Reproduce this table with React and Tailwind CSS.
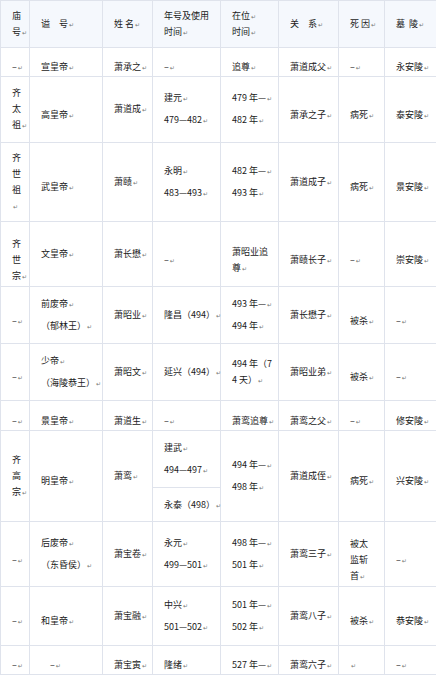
const WIDTHS = [29, 73, 50, 68, 58, 60, 46, 53]

// "|" = new paragraph, "/" = wrapped line, "¶" = paragraph mark, leading "^" = sits a bit low
const HEADER = ['庙/号¶', '谥　号¶', '姓 名¶', '年号及使用/时间¶', '在位¶/时间¶', '关　系¶', '死 因¶', '墓  陵¶']

const ROWS = [
  { h: 29, cells: ['^–¶', '^宣皇帝¶', '^萧承之¶', '^–¶', '^追尊¶', '^萧道成父¶', '^–¶', '^永安陵¶'] },
  { h: 66, cells: ['齐/太/祖¶', '^高皇帝¶', '萧道成¶', '建元¶|479—482¶', '479 年—¶|482 年¶', '^萧承之子¶', '^病死¶', '^泰安陵¶'] },
  { h: 80, cells: ['齐/世/祖/¶', '^武皇帝¶', '萧赜¶', '永明¶|483—493¶', '482 年—¶|493 年¶', '萧道成子¶', '^病死¶', '^景安陵¶'] },
  { h: 65, cells: ['^齐/世/宗¶', '文皇帝¶', '萧长懋¶', '^–¶', '^萧昭业追/尊¶', '^萧赜长子¶', '^–¶', '^崇安陵¶'] },
  { h: 57, cells: ['^–¶', '前废帝¶|（郁林王）¶', '萧昭业¶', '隆昌（494）¶', '493 年—¶|494 年¶', '萧长懋子¶', '^被杀¶', '^–¶'] },
  { h: 57, cells: ['^–¶', '少帝¶|（海陵恭王）¶', '萧昭文¶', '延兴（494）¶', '494 年（7/4 天）¶', '萧昭业弟¶', '^被杀¶', '^–¶'] },
  { h: 30, cells: ['^–¶', '^景皇帝¶', '^萧道生¶', '^–¶', '^萧鸾追尊¶', '^萧鸾之父¶', '^–¶', '^修安陵¶'] },
  {
    h: 58,
    cells: [
      { t: '齐/高/宗¶', rs: 2 },
      { t: '^明皇帝¶', rs: 2 },
      { t: '萧鸾¶', rs: 2 },
      '建武¶|494—497¶',
      { t: '494 年—¶|498 年¶', rs: 2 },
      { t: '萧道成侄¶', rs: 2 },
      { t: '^病死¶', rs: 2 },
      { t: '^兴安陵¶', rs: 2 },
    ],
  },
  { h: 34, cells: ['永泰（498）¶'] },
  { h: 65, cells: ['^–¶', '后废帝¶|（东昏侯）¶', '萧宝卷¶', '永元¶|499—501¶', '498 年—¶|501 年¶', '萧鸾三子¶', '^被太/监斩/首¶', '^–¶'] },
  { h: 59, cells: ['^–¶', '^和皇帝¶', '萧宝融¶', '中兴¶|501—502¶', '501 年—¶|502 年¶', '萧鸾八子¶', '^被杀¶', '^恭安陵¶'] },
  { h: 29, cells: ['^–¶', '^　–¶', '^萧宝寅¶', '^隆绪¶', '^527 年—¶', '^萧鸾六子¶', '^¶', '^–¶'] },
]

function Mark() {
  return <span className="ml-px text-[6px] leading-none text-[#777] font-['DejaVu_Sans',sans-serif]">↵</span>
}

function Line({ text }) {
  const parts = text.split('¶')
  return (
    <div className="whitespace-pre leading-[16px] h-[16px]">
      {parts.map((p, i) => (
        <span key={i}>
          {p}
          {i < parts.length - 1 && <Mark />}
        </span>
      ))}
    </div>
  )
}

function Cell({ cell, header }) {
  const c = typeof cell === 'string' ? { t: cell } : cell
  const low = c.t.startsWith('^')
  const text = low ? c.t.slice(1) : c.t
  return (
    <td
      rowSpan={c.rs}
      className={`border border-[#dfe3ec] pl-[11px] pr-[2px] py-0 align-middle ${low ? 'pt-[11px]' : ''} ${
        header ? 'bg-[#f5f8fd]' : ''
      }`}
    >
      {text.split('|').map((para, i) => (
        <div key={i} className={i > 0 ? 'mt-[6px]' : ''}>
          {para.split('/').map((ln, j) => (
            <Line key={j} text={ln} />
          ))}
        </div>
      ))}
    </td>
  )
}

export default function App() {
  return (
    <div className="w-[436px] h-[678px] overflow-hidden bg-white">
      <table className="table-fixed border-collapse w-[437px] text-[9px] text-[#1a1a1a] font-['Noto_Sans_CJK_SC','Noto_Sans',sans-serif]">
        <colgroup>
          {WIDTHS.map((w, i) => (
            <col key={i} style={{ width: w }} />
          ))}
        </colgroup>
        <tbody>
          <tr className="h-[47px]">
            {HEADER.map((h, i) => (
              <Cell key={i} cell={h} header />
            ))}
          </tr>
          {ROWS.map((r, i) => (
            <tr key={i} style={{ height: r.h - 0.2 }}>
              {r.cells.map((c, j) => (
                <Cell key={j} cell={c} />
              ))}
            </tr>
          ))}
        </tbody>
      </table>
    </div>
  )
}
